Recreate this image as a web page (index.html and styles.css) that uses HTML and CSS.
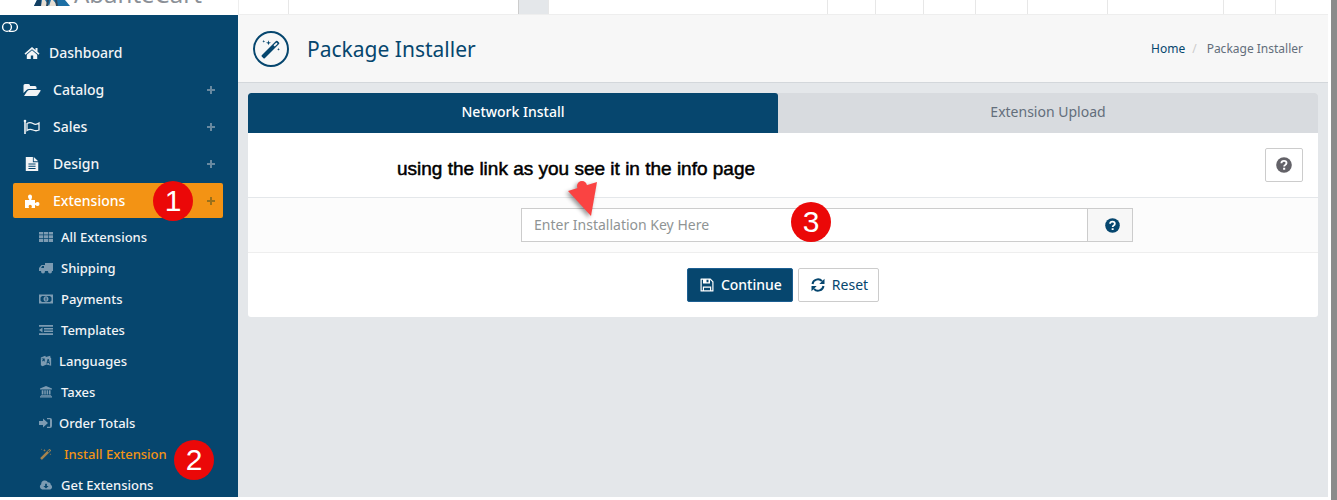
FILE: index.html
```
<!DOCTYPE html>
<html lang="en">
<head>
    <meta charset="UTF-8">
    <meta name="viewport" content="width=device-width, initial-scale=1.0">
    <title>Package Installer</title>
    <link rel="stylesheet" href="styles.css">
</head>
<body>
    <!-- Icon shapes shared by the menu and the form -->
    <svg class="icon-defs" width="0" height="0">
        <symbol id="i-toggle" viewBox="0 0 18 12"><path d="M8 1.600H12a4.400 4.400 0 0 1 0 8.800H8" fill="none" stroke="currentColor" stroke-width="1.4"/><circle cx="6" cy="6" r="4.400" fill="none" stroke="currentColor" stroke-width="1.4"/></symbol>
        <symbol id="i-home" viewBox="0 0 16 16"><path d="M8 2 .5 8.600l1 1.200L8 4.200l6.500 5.600 1-1.200L13.500 6.800V3h-2v2z"/><path d="M8 5.300 2.800 9.700V14h4v-3.500h2.400V14h4V9.700z"/></symbol>
        <symbol id="i-folder" viewBox="0 0 18 16"><path d="M.5 11V3.500Q.5 2 2 2h3.500Q7 2 7 3.500V4h5q1.500 0 1.500 1.500V7H6Q4.500 7 3.500 8z"/><path d="M1 14l3-4.500Q5 8 6 8h11q1 0 .5 1L15 12.800Q14.200 14 13 14z"/></symbol>
        <symbol id="i-flag" viewBox="0 0 18 16"><path d="M2 2v13" fill="none" stroke="currentColor" stroke-width="1.600"/><circle cx="2" cy="2" r="1.300"/><path d="M4 4.500q3-1.800 6 0t6-.5v7q-3 1.500-6 0t-6 .5z" fill="none" stroke="currentColor" stroke-width="1.300"/></symbol>
        <symbol id="i-file" viewBox="0 0 16 18"><path fill-rule="evenodd" d="M1 1h8v6h6v10H1zM4 8.500v1h8v-1zm0 2.500v1h8v-1zm0 2.500v1h8v-1z"/><path d="M10 1l5 5h-5z"/></symbol>
        <symbol id="i-puzzle" viewBox="0 0 16 16"><path d="M1 7h4.500Q3.800 5 4 3.200 4.300 1.500 6 1.500t2 1.700Q8.200 5 7.200 7H11v3.200q1.500-1.200 2.800-1.200 1.700.2 1.700 2t-1.700 2q-1.500 0-2.800-1.200V15H7.500q.8-2-.1-2.800-1.400-.9-2.400 0-.8.800 0 2.800H1z"/></symbol>
        <symbol id="i-plus" viewBox="0 0 10 10"><path d="M4 1h2v3h3v2H6v3H4V6H1V4h3z"/></symbol>
        <symbol id="i-table" viewBox="0 0 14 12"><path d="M0 1h4.300v2.500H0zM5 1h4v2.500H5zM9.700 1H14v2.500H9.700zM0 4.300h4.300V7H0zM5 4.300h4V7H5zM9.700 4.300H14V7H9.700zM0 7.800h4.300V11H0zM5 7.800h4V11H5zM9.700 7.800H14V11H9.700z"/></symbol>
        <symbol id="i-truck" viewBox="0 0 14 12"><path fill-rule="evenodd" d="M6 1h8v8H0V6l2.500-3H6zM2 6h3V4H3.300z"/><circle cx="4" cy="9.500" r="2"/><circle cx="11" cy="9.500" r="2"/></symbol>
        <symbol id="i-money" viewBox="0 0 14 12"><path fill-rule="evenodd" d="M0 1.500h14v9H0zM3 3L1.500 4.500v3L3 9h8l1.500-1.500v-3L11 3z"/><path fill-rule="evenodd" d="M7 3.200c1.500 0 2.500 1.200 2.500 2.800S8.500 8.800 7 8.800 4.500 7.600 4.500 6 5.500 3.200 7 3.200zM6.500 4.500v3h1v-3z"/></symbol>
        <symbol id="i-indent" viewBox="0 0 14 12"><path d="M0 1h14v1.800H0zM5 4h9v1.500H5zM5 6.600h9v1.500H5zM0 9.300h14V11H0zM0 6l3.500-2.500v5z"/></symbol>
        <symbol id="i-language" viewBox="0 0 14 14"><path fill-rule="evenodd" d="M1 3l5-2 1 1.200L12 1v2l1 .5v9L7.500 11 3 13l-2-1zM2 4v1l1.500-.2L2.500 7l1 .5.5-1.200L5.500 8V4zM9 4.500L7.500 10l1 .3.300-1.300 1.600.4.400 1.400 1 .3L10.300 5zM9.500 6.500l.5 1.800-1-.3z"/></symbol>
        <symbol id="i-bank" viewBox="0 0 14 14"><path d="M7 0l7 3v1H0V3zM2 5h2v5H2zM5 5h1.700v5H5zM7.700 5h1.600v5H7.700zM10.300 5h2v5h-2zM1 10.500h12v1H1zM0 12h14v1.500H0z"/></symbol>
        <symbol id="i-signin" viewBox="0 0 14 12"><path d="M0 4h4V1.500L9 6l-5 4.500V8H0z"/><path d="M8 1h3q2 0 2 2v6q0 2-2 2H8V9.700h3V2.300H8z"/></symbol>
        <symbol id="i-magic" viewBox="0 0 16 16"><path fill-rule="evenodd" d="M.6 13L12 1.600q.6-.6 1.200 0l1.200 1.200q.6.600 0 1.200L3 15.400q-.5.500-1 0l-1.400-1.400q-.5-.5 0-1zM10 5l1 1 2.300-2.300-1-1z"/><path d="M6 1l.5 1.500L8 3l-1.500.5L6 5l-.5-1.500L4 3l1.500-.5zM2.200.6l.3.900.9.300-.9.300-.3.900-.3-.9-.9-.3.900-.3zM14 7l.3.900.9.300-.9.300-.3.900-.3-.9-.9-.3.900-.3z"/></symbol>
        <symbol id="i-cloud" viewBox="0 0 16 12"><path fill-rule="evenodd" d="M3.500 11A3.300 3.300 0 0 1 2.500 5 4.200 4.200 0 0 1 10.400 3a2.500 2.500 0 0 1 3 2.800A2.800 2.800 0 0 1 13 11zM7 4.500V7H5l3 3 3-3H9V4.500z"/></symbol>
        <symbol id="i-help" viewBox="0 0 16 16"><circle cx="8" cy="8" r="7.800"/><path d="M5.400 6.200Q5.500 3.900 8 3.900t2.500 2.200Q10.500 7.300 9.200 8 8.200 8.500 8.200 9.600" fill="none" stroke="#fff" stroke-width="1.900"/><path d="M7.100 10.800h2.100v2H7.100z" fill="#fff"/></symbol>
        <symbol id="i-save" viewBox="0 0 14 14"><path fill-rule="evenodd" d="M1 .5h9.500l3 3V13q0 .5-.5.5H1q-.5 0-.5-.5V1Q.5.5 1 .5zM1.700 1.700v10.600h1.100V8.500h8.400v3.800h1.100V4L10 1.700V5.500H3V1.700zM6.500 1.700v2.500h2V1.700zM4 9.700v2.600h6V9.700z"/></symbol>
        <symbol id="i-refresh" viewBox="0 0 14 14"><path d="M1.500 6A5.500 5.500 0 0 1 11 3.200M12.500 8A5.500 5.500 0 0 1 3 10.800" fill="none" stroke="currentColor" stroke-width="2"/><path d="M13.500.8V6H8.300zM.5 13.200V8h5.200z"/></symbol>
    </svg>

    <header class="topbar">
        <a class="brand" href="#" aria-label="Store admin">
            <svg width="36" height="6" viewBox="0 0 36 6">
                <path d="M3 0h28l5 6H0z" fill="#1d6fa5"/>
                <path d="M3 0h4l1 6H0z" fill="#123e62"/>
                <path d="M8 0h3l4 6H7zM17 0h2l5 6h-9z" fill="#e7ded3"/>
                <path d="M13 0h2l-1 6h-2zM21 0h2l1 6h-2z" fill="#29465e"/>
            </svg>
            <span class="brand-name">AbanteCart</span>
        </a>
        <div class="topbar-cells">
            <span class="cell cell-menu"></span>
            <span class="cell cell-search"></span>
            <span class="cell cell-button"></span>
            <span class="cell cell-space"></span>
            <span class="cell cell-sm"></span>
            <span class="cell cell-sm"></span>
            <span class="cell cell-md"></span>
            <span class="cell cell-md"></span>
            <span class="cell cell-lg"></span>
            <span class="cell cell-user"></span>
            <span class="cell cell-md"></span>
            <span class="cell cell-md"></span>
        </div>
    </header>

    <div class="layout">
        <nav class="sidebar">
            <button type="button" class="sidebar-toggle" aria-label="Toggle menu"><svg class="icon"><use href="#i-toggle"/></svg></button>
            <ul class="menu">
                <li><a href="#" class="home"><svg class="icon"><use href="#i-home"/></svg>Dashboard</a></li>
                <li><a href="#"><svg class="icon"><use href="#i-folder"/></svg>Catalog<svg class="plus"><use href="#i-plus"/></svg></a></li>
                <li><a href="#"><svg class="icon"><use href="#i-flag"/></svg>Sales<svg class="plus"><use href="#i-plus"/></svg></a></li>
                <li><a href="#"><svg class="icon"><use href="#i-file"/></svg>Design<svg class="plus"><use href="#i-plus"/></svg></a></li>
                <li class="active"><a href="#"><svg class="icon"><use href="#i-puzzle"/></svg>Extensions<svg class="plus"><use href="#i-plus"/></svg></a><span class="step step-1">1</span></li>
            </ul>
            <ul class="submenu">
                <li><a href="#"><svg class="icon"><use href="#i-table"/></svg>All Extensions</a></li>
                <li><a href="#"><svg class="icon"><use href="#i-truck"/></svg>Shipping</a></li>
                <li><a href="#"><svg class="icon"><use href="#i-money"/></svg>Payments</a></li>
                <li><a href="#"><svg class="icon"><use href="#i-indent"/></svg>Templates</a></li>
                <li><a href="#" class="narrow"><svg class="icon"><use href="#i-language"/></svg>Languages</a></li>
                <li><a href="#"><svg class="icon"><use href="#i-bank"/></svg>Taxes</a></li>
                <li><a href="#" class="narrow"><svg class="icon"><use href="#i-signin"/></svg>Order Totals</a></li>
                <li class="current"><a href="#"><svg class="icon"><use href="#i-magic"/></svg>Install Extension</a><span class="step step-2">2</span></li>
                <li><a href="#"><svg class="icon"><use href="#i-cloud"/></svg>Get Extensions</a></li>
            </ul>
        </nav>

        <main class="content">
            <div class="page-header">
                <span class="page-icon"><svg class="icon"><use href="#i-magic"/></svg></span>
                <h1>Package Installer</h1>
                <div class="breadcrumb">
                    <a href="#">Home</a><span class="slash">/</span><span>Package Installer</span>
                </div>
            </div>

            <div class="panel">
                <div class="tabs">
                    <a href="#" class="tab tab-active">Network Install</a>
                    <a href="#" class="tab">Extension Upload</a>
                </div>
                <div class="panel-top">
                    <p class="note">using the link as you see it in the info page</p>
                    <button type="button" class="help-button" aria-label="Help"><svg class="icon"><use href="#i-help"/></svg></button>
                </div>
                <form>
                    <div class="key-row">
                        <div class="key-group">
                            <input type="text" id="install-key" aria-label="Installation Key" placeholder="Enter Installation Key Here">
                            <label for="install-key" class="key-help"><svg class="icon"><use href="#i-help"/></svg></label>
                            <svg class="arrow" width="32" height="36" viewBox="0 0 32 36"><circle cx="15" cy="5" r="5"/><path d="M1 10L30 1L24 35Z"/></svg>
                            <span class="step step-3">3</span>
                        </div>
                    </div>
                    <div class="form-actions">
                        <button type="submit" class="btn btn-primary"><svg class="icon"><use href="#i-save"/></svg>Continue</button>
                        <button type="reset" class="btn btn-default"><svg class="icon"><use href="#i-refresh"/></svg>Reset</button>
                    </div>
                </form>
            </div>
        </main>
    </div>
</body>
</html>
```
FILE: styles.css
```
* {
    box-sizing: border-box;
}

body {
    margin: 0;
    height: 100vh;
    display: flex;
    flex-direction: column;
    padding-right: 3px;
    padding-bottom: 3px;
    border-right: 6px solid #8b8b8b;
    background-color: #fff;
    font-family: 'Noto Sans', 'Open Sans', sans-serif;
    font-size: 14px;
    line-height: 20px;
    color: #636e7b;
}

a {
    color: inherit;
    text-decoration: none;
}

button {
    font: inherit;
    cursor: pointer;
}

.icon-defs {
    position: absolute;
}

.icon,
.plus {
    display: block;
    flex: none;
    fill: currentColor;
}

/* Top bar */
.topbar {
    display: flex;
    flex: none;
    height: 15px;
    overflow: hidden;
}

.brand {
    display: flex;
    flex: none;
    width: 238px;
    padding-left: 34px;
    gap: 4px;
}

.brand-name {
    margin-top: -20px;
    font-size: 24px;
    line-height: 28px;
    color: #8b9097;
}

.topbar-cells {
    flex: 1;
    display: flex;
    border-left: 1px solid #eee;
    border-bottom: 1px solid #eee;
}

.cell {
    border-right: 1px solid #e7e7e7;
    width: 52px;
}

.cell:last-child {
    border-right: none;
}

.cell-menu {
    width: 50px;
}

.cell-search {
    width: 230px;
    border-color: #ccc;
}

.cell-button {
    width: 30px;
    background-color: #e4e7ea;
}

.cell-space {
    flex: 1;
}

.cell-sm {
    width: 48px;
}

.cell-lg {
    width: 80px;
}

.cell-user {
    width: 116px;
}

/* Sidebar */
.layout {
    flex: 1;
    display: flex;
    min-height: 0;
}

.sidebar {
    flex: none;
    width: 238px;
    background-color: #06466e;
    color: #f2f4f6;
    font-weight: 500;
    overflow: hidden;
}

.sidebar-toggle {
    display: block;
    padding: 6px 0 2px 1px;
    border: none;
    background: none;
    color: #fff;
}

.sidebar-toggle .icon {
    width: 18px;
    height: 12px;
}

.menu,
.submenu {
    margin: 0;
    padding: 0;
    list-style: none;
}

.menu {
    padding: 0 15px 0 13px;
}

.menu li,
.submenu li {
    position: relative;
}

.menu li {
    margin-bottom: 2px;
}

.menu a {
    display: flex;
    align-items: center;
    height: 35px;
    padding: 0 7px 0 10px;
    gap: 12px;
    border-radius: 2px;
}

.menu .icon {
    width: 18px;
    height: 16px;
}

.menu .home {
    gap: 8px;
}

.menu .plus {
    width: 10px;
    height: 10px;
    margin-left: auto;
    color: #6889a0;
}

.menu .active a {
    background-color: #f39314;
    color: #fff;
}

.menu .active .plus {
    color: #99701b;
}

.submenu {
    padding: 1px 0 0 39px;
    font-size: 13px;
}

.submenu a {
    display: flex;
    align-items: center;
    height: 31px;
    gap: 8px;
}

.submenu .narrow {
    gap: 6px;
}

.submenu .icon {
    width: 14px;
    height: 12px;
    color: #7c9bb2;
}

.submenu .current a {
    gap: 11px;
    color: #f39314;
}

.submenu .current .icon {
    color: #a5844f;
}

/* Numbered markers */
.step {
    position: absolute;
    width: 40px;
    height: 40px;
    border-radius: 50%;
    background-color: #eb0808;
    color: #fff;
    font-family: 'Liberation Sans', Arial, sans-serif;
    font-size: 30px;
    font-weight: normal;
    line-height: 40px;
    text-align: center;
}

.step-1 {
    top: -2px;
    left: 140px;
}

.step-2 {
    top: 2px;
    left: 135px;
}

.step-3 {
    top: -6px;
    left: 270px;
}

/* Page header */
.content {
    flex: 1;
    background-color: #e4e7ea;
}

.page-header {
    display: flex;
    align-items: center;
    height: 68px;
    padding: 0 25px 0 15px;
    border-bottom: 1px solid #d3d7db;
    background-color: #f7f7f7;
}

.page-icon {
    display: flex;
    align-items: center;
    justify-content: center;
    width: 36px;
    height: 36px;
    border: 2px solid #06466e;
    border-radius: 50%;
    color: #06466e;
}

.page-icon .icon {
    width: 20px;
    height: 20px;
}

.page-header h1 {
    margin: 0 auto 0 18px;
    font-size: 21px;
    font-weight: normal;
    line-height: 28px;
    color: #06466e;
}

.breadcrumb {
    font-size: 12px;
}

.breadcrumb a {
    color: #06466e;
}

.breadcrumb .slash {
    margin: 0 10px 0 7px;
    color: #ccc;
}

/* Panel */
.panel {
    margin: 10px;
    border-radius: 3px;
    background-color: #fff;
    overflow: hidden;
}

.tabs {
    display: flex;
    background-color: #d8dbdf;
}

.tab {
    flex: 54;
    padding: 9px 0 11px;
    text-align: center;
}

.tab-active {
    flex: 53;
    border-radius: 3px 3px 0 0;
    background-color: #06466e;
    color: #fff;
    font-weight: 500;
}

.panel-top {
    display: flex;
    align-items: flex-start;
    justify-content: space-between;
    height: 65px;
    padding: 15px 15px 0 149px;
    border-bottom: 1px solid #e4e7ea;
}

.note {
    margin: 11px 0 0;
    font-family: 'Liberation Sans', Arial, sans-serif;
    font-size: 19px;
    color: #000;
    -webkit-text-stroke: 0.5px #000;
}

.help-button {
    padding: 8px 10px;
    border: 1px solid #ccc;
    border-radius: 2px;
    background-color: #fff;
    color: #636268;
}

.help-button .icon {
    width: 16px;
    height: 16px;
}

.key-row {
    padding: 10px 185px 10px 273px;
    border-bottom: 1px solid #eee;
    background-color: #fcfcfc;
}

.key-group {
    position: relative;
    display: flex;
    height: 34px;
}

.key-group input {
    flex: 1;
    min-width: 0;
    padding: 0 12px;
    border: 1px solid #ccc;
    background-color: #fff;
    font: inherit;
    color: #555;
}

.key-group input::placeholder {
    color: #8f9494;
}

.key-help {
    display: flex;
    align-items: center;
    justify-content: center;
    width: 45px;
    padding-left: 4px;
    border: 1px solid #ccc;
    border-left: none;
    background-color: #f7f7f7;
    color: #06466e;
}

.key-help .icon {
    width: 15px;
    height: 15px;
}

/* Pointer over the key field */
.arrow {
    position: absolute;
    top: -27px;
    left: 46px;
    fill: #fa4342;
    filter: drop-shadow(-2px 2px 2px rgba(0, 0, 0, 0.4));
}

.form-actions {
    display: flex;
    justify-content: center;
    gap: 5px;
    padding: 15px 0;
}

.btn {
    display: flex;
    align-items: center;
    height: 34px;
    padding: 0 10px 0 12px;
    gap: 7px;
    border: 1px solid #ccc;
    border-radius: 2px;
    background-color: #fff;
    color: #06466e;
}

.btn .icon {
    width: 14px;
    height: 14px;
}

.btn-primary {
    border-color: #1c5f92;
    background-color: #06466e;
    color: #fff;
    font-weight: 500;
}
```
